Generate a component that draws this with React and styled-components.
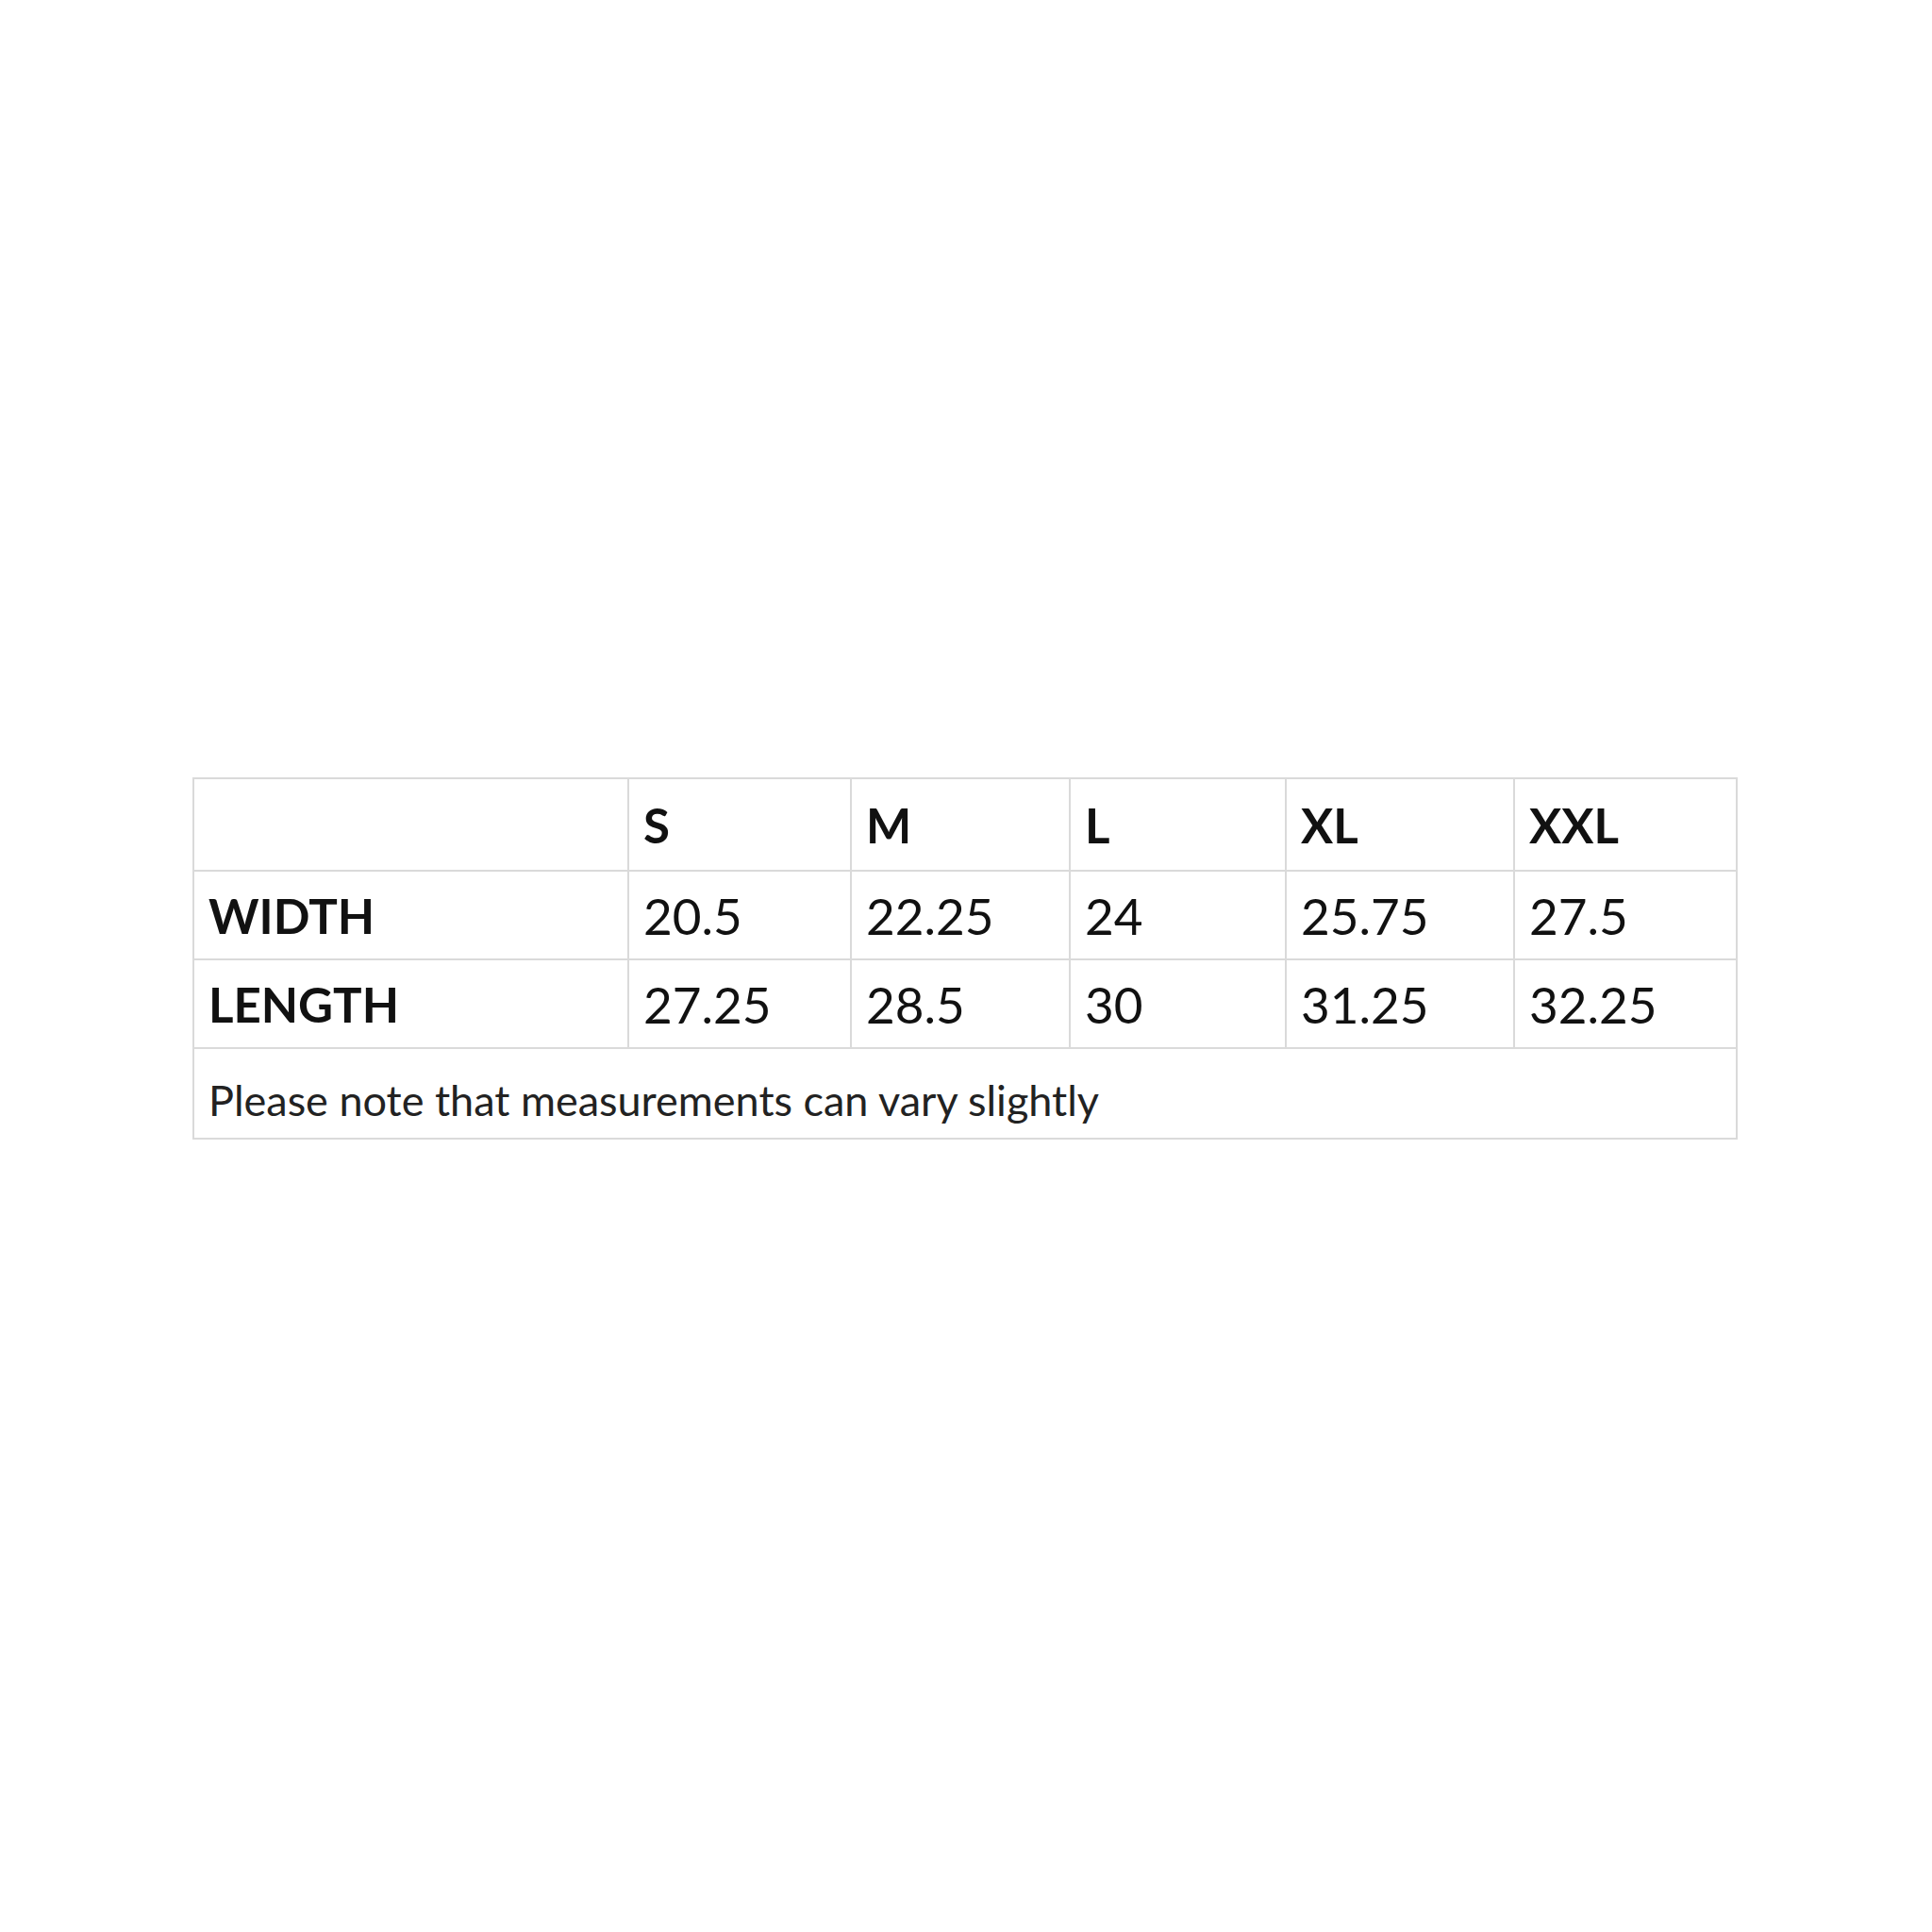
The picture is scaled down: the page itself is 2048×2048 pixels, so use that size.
import React from 'react';
import styled, { createGlobalStyle } from 'styled-components';

const GlobalStyle = createGlobalStyle`
  html, body {
    margin: 0;
    padding: 0;
    background: #ffffff;
  }
`;

const Page = styled.div`
  width: 2048px;
  height: 2048px;
  box-sizing: border-box;
  padding: 824px 0 0 204px;
  background: #ffffff;
  font-family: Lato, "Open Sans", "Liberation Sans", sans-serif;
`;

const Table = styled.table`
  border-collapse: collapse;
  table-layout: fixed;
  width: 1636px;
`;

const Cell = styled.td`
  border: 2px solid #dadada;
  padding: 0 0 0 15px;
  height: ${p => p.$h || 94}px;
  box-sizing: border-box;
  vertical-align: middle;
  color: #111111;
  font-size: ${p => (p.$bold ? 51 : 53)}px;
  font-weight: ${p => (p.$bold ? 700 : 400)};
  white-space: nowrap;
`;

const Note = styled(Cell)`
  font-size: 45px;
  color: #222222;
  padding-top: 14px;
`;

const widths = [461, 236, 232, 229, 242, 236];

const sizes = ['S', 'M', 'L', 'XL', 'XXL'];
const rows = [
  { label: 'WIDTH', values: ['20.5', '22.25', '24', '25.75', '27.5'] },
  { label: 'LENGTH', values: ['27.25', '28.5', '30', '31.25', '32.25'] },
];

export default function App() {
  return (
    <>
      <GlobalStyle />
      <Page>
        <Table>
          <colgroup>
            {widths.map((w, i) => (
              <col key={i} style={{ width: w }} />
            ))}
          </colgroup>
          <tbody>
            <tr>
              <Cell $h={98} />
              {sizes.map(s => (
                <Cell key={s} $h={98} $bold>{s}</Cell>
              ))}
            </tr>
            {rows.map(r => (
              <tr key={r.label}>
                <Cell $bold>{r.label}</Cell>
                {r.values.map((v, i) => (
                  <Cell key={i}>{v}</Cell>
                ))}
              </tr>
            ))}
            <tr>
              <Note colSpan={6} $h={96}>Please note that measurements can vary slightly</Note>
            </tr>
          </tbody>
        </Table>
      </Page>
    </>
  );
}
